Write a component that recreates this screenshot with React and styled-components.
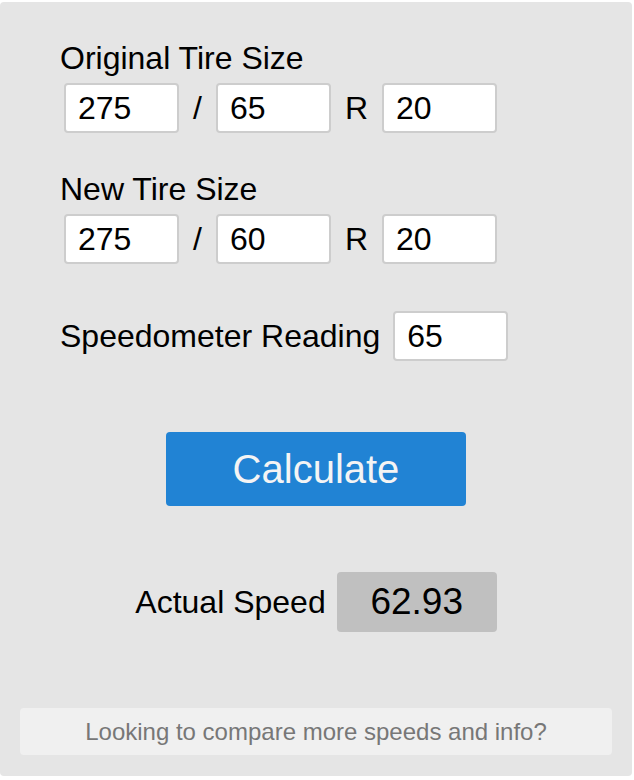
import React, { useState } from "react";
import styled, { createGlobalStyle } from "styled-components";

const GlobalStyle = createGlobalStyle`
  html, body {
    margin: 0;
    padding: 0;
    background: #ffffff;
    font-family: "Liberation Sans", Arial, Helvetica, sans-serif;
  }
`;

function App() {
  const [original, setOriginal] = useState({ width: "275", ratio: "65", rim: "20" });
  const [next, setNext] = useState({ width: "275", ratio: "60", rim: "20" });
  const [reading, setReading] = useState("65");
  const [actual, setActual] = useState("62.93");

  const calculate = () => {
    const diameter = (t) =>
      (Number(t.width) * Number(t.ratio) * 2) / 100 / 25.4 + Number(t.rim);
    const a = diameter(original);
    const b = diameter(next);
    if (!a || !b) return;
    setActual(((Number(reading) * b) / a).toFixed(2));
  };

  const tireRow = (tire, setTire) => (
    <Fields>
      <Field
        value={tire.width}
        onChange={(e) => setTire({ ...tire, width: e.target.value })}
      />
      <Separator $width={37}>/</Separator>
      <Field
        value={tire.ratio}
        onChange={(e) => setTire({ ...tire, ratio: e.target.value })}
      />
      <Separator $width={51}>R</Separator>
      <Field
        value={tire.rim}
        onChange={(e) => setTire({ ...tire, rim: e.target.value })}
      />
    </Fields>
  );

  return (
    <>
      <GlobalStyle />
      <Panel>
        <Group>
          <Label>Original Tire Size</Label>
          {tireRow(original, setOriginal)}
        </Group>
        <Group>
          <Label>New Tire Size</Label>
          {tireRow(next, setNext)}
        </Group>
        <Reading>
          <Label>Speedometer Reading</Label>
          <Field value={reading} onChange={(e) => setReading(e.target.value)} />
        </Reading>
        <Actions>
          <CalcButton onClick={calculate}>Calculate</CalcButton>
        </Actions>
        <Result>
          <Label>Actual Speed</Label>
          <ResultBox>{actual}</ResultBox>
        </Result>
        <MoreInfo>Looking to compare more speeds and info?</MoreInfo>
      </Panel>
    </>
  );
}

export default App;

const Panel = styled.div`
  box-sizing: border-box;
  width: 632px;
  height: 774px;
  margin-top: 2px;
  background-color: #e5e5e5;
  border-radius: 4px;
  padding: 38px 20px 21px 60px;
  display: flex;
  flex-direction: column;
  color: #000000;
`;

const Group = styled.div`
  display: flex;
  flex-direction: column;
  gap: 7px;
  margin-bottom: 38px;
`;

const Label = styled.span`
  font-size: 32px;
  line-height: 36px;
  white-space: nowrap;
`;

const Fields = styled.div`
  display: flex;
  align-items: center;
  padding-left: 4px;
`;

const Field = styled.input`
  box-sizing: border-box;
  width: 115px;
  height: 50px;
  padding: 0 12px;
  border: 2px solid #cdcdcd;
  border-radius: 4px;
  background: #ffffff;
  font-family: "Liberation Sans", Arial, sans-serif;
  font-size: 32px;
  color: #000000;
  outline: none;
`;

const Separator = styled.span`
  width: ${(p) => p.$width}px;
  text-align: center;
  font-size: 32px;
  line-height: 36px;
`;

const Reading = styled.div`
  display: flex;
  align-items: center;
  gap: 13px;
  margin-top: 9px;
`;

const Actions = styled.div`
  display: flex;
  justify-content: center;
  margin: 71px 0 0 -40px;
`;

const CalcButton = styled.button`
  width: 300px;
  height: 74px;
  border: none;
  border-radius: 4px;
  background-color: #2183d4;
  color: #f4f4f4;
  font-family: "Liberation Sans", Arial, sans-serif;
  font-size: 40px;
  cursor: pointer;
`;

const Result = styled.div`
  display: flex;
  align-items: center;
  justify-content: center;
  gap: 11px;
  margin: 66px 0 0 -40px;
`;

const ResultBox = styled.div`
  width: 160px;
  height: 60px;
  border-radius: 4px;
  background-color: #c0c0c0;
  display: flex;
  align-items: center;
  justify-content: center;
  font-size: 37px;
`;

const MoreInfo = styled.div`
  margin: auto 0 0 -40px;
  height: 47px;
  border-radius: 4px;
  background-color: #f0f0f0;
  color: #777777;
  font-size: 24px;
  display: flex;
  align-items: center;
  justify-content: center;
`;
